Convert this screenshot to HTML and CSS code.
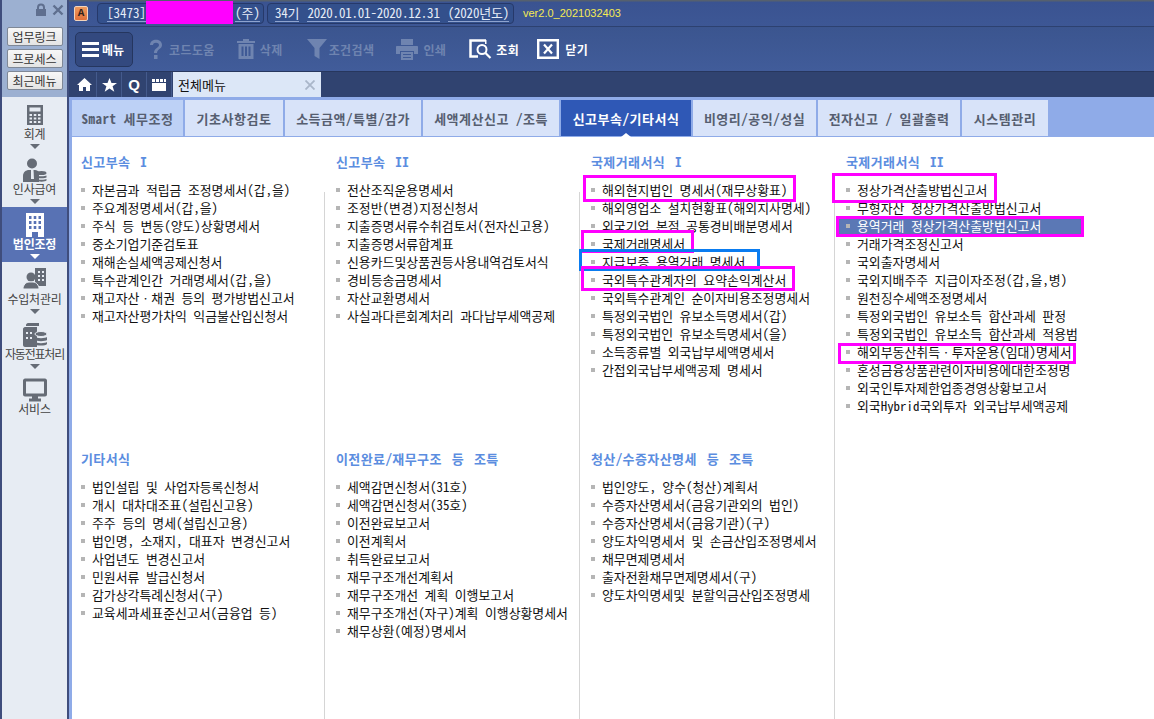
FILE: index.html
```html
<!DOCTYPE html>
<html lang="ko">
<head>
<meta charset="utf-8">
<title>전체메뉴</title>
<link rel="stylesheet" href="styles.css">
</head>
<body>
<div class="app">
  <aside class="side">
    <div class="side-top">
      <div class="side-ctl">
        <svg width="14" height="14" viewBox="0 0 14 14"><path d="M3 6V4.500a4 4 0 0 1 8 0V6h1v7H2V6zm2 0h4V4.500a2 2 0 0 0-4 0z" fill="#5f6f8f"/></svg>
        <svg width="14" height="14" viewBox="0 0 14 14"><path d="M2.500 2.500l9 9M11.500 2.500l-9 9" stroke="#5f6f8f" stroke-width="2.400"/></svg>
      </div>
      <button class="side-btn">업무링크</button>
      <button class="side-btn">프로세스</button>
      <button class="side-btn">최근메뉴</button>
    </div>
    <nav class="side-nav">
      <a class="nav-item">
        <svg width="20" height="20" viewBox="0 0 20 20"><path fill-rule="evenodd" d="M2 0h16v20H2zM4.500 2.500v4h11v-4zM4.500 9v2h2.500V9zm4.300 0v2h2.500V9zm4.200 0v2h2.500V9zM4.500 12.500v2h2.500v-2zm4.300 0v2h2.500v-2zm4.200 0v2h2.500v-2zM4.500 16v2h2.500v-2zm4.300 0v2h2.500v-2zm4.200 0v2h2.500v-2z" fill="#666c76"/></svg>
        <span class="nav-label">회계</span><i class="nav-arrow"></i>
      </a>
      <a class="nav-item">
        <svg width="24" height="24" viewBox="0 0 24 24"><circle cx="9" cy="5.500" r="5" fill="#666c76"/><path d="M0 24v-6c0-4 3-6 6-6h6c2 0 3 1 4 2v10z" fill="#666c76"/><path d="M8 12h2.500l.5 9h-3z" fill="#e7ecf3"/><ellipse cx="18.500" cy="15" rx="5" ry="2" fill="#666c76"/><path d="M13.500 17.500c1 1 9 1 10 0v2c-1 1-9 1-10 0zM13.500 21c1 1 9 1 10 0v1.500c-1 1.500-9 1.500-10 0z" fill="#666c76"/></svg>
        <span class="nav-label">인사급여</span><i class="nav-arrow"></i>
      </a>
      <a class="nav-item is-active">
        <svg width="20" height="24" viewBox="0 0 20 24"><path fill-rule="evenodd" d="M1 0h18v24h-6v-5H7v5H1zM4 3v3h2.500V3zm4.700 0v3h2.600V3zm4.800 0v3H16V3zM4 8v3h2.500V8zm4.700 0v3h2.600V8zm4.800 0v3H16V8zM4 13v3h2.500v-3zm4.700 0v3h2.600v-3zm4.800 0v3H16v-3z" fill="#fff"/></svg>
        <span class="nav-label">법인조정</span><i class="nav-arrow"></i>
      </a>
      <a class="nav-item">
        <svg width="24" height="24" viewBox="0 0 24 24"><path fill-rule="evenodd" d="M12 0h11v18H12zM15 3v2h2V3zm4 0v2h2V3zM15 7v2h2V7zm4 0v2h2V7zM15 11v2h2v-2zm4 0v2h2v-2z" fill="#666c76"/><circle cx="8" cy="9" r="4.500" fill="#666c76"/><path d="M0 21c0-4 3-7 6-7h4c3 0 6 3 6 7z" fill="#666c76" stroke="#e7ecf3"/></svg>
        <span class="nav-label">수입처관리</span><i class="nav-arrow"></i>
      </a>
      <a class="nav-item">
        <svg width="24" height="24" viewBox="0 0 24 24"><path fill-rule="evenodd" d="M3 2c0-1 1-2 2-2h11v3H3zM0 6c0-1 1-2 2-2h12v20H2c-1 0-2-1-2-2zm3 3v2h2V9zm4 0v2h2V9zM3 14v2h2v-2zm4 0v2h2v-2z" fill="#666c76"/><ellipse cx="18" cy="11" rx="6" ry="2.500" fill="#666c76" stroke="#e7ecf3"/><path d="M12 14c1 1.500 11 1.500 12 0v3c-1 1.500-11 1.500-12 0zM12 19c1 1.500 11 1.500 12 0v2c-1 2-11 2-12 0z" fill="#666c76"/></svg>
        <span class="nav-label nav-label-long">자동전표처리</span><i class="nav-arrow"></i>
      </a>
      <a class="nav-item">
        <svg width="24" height="23" viewBox="0 0 24 23"><path fill-rule="evenodd" d="M2 0h20c1 0 2 1 2 2v14c0 1-1 2-2 2h-7v2h3v3H6v-3h3v-2H2c-1 0-2-1-2-2V2c0-1 1-2 2-2zM3 3v12h18V3z" fill="#666c76"/></svg>
        <span class="nav-label">서비스</span>
      </a>
    </nav>
  </aside>

  <main class="main">
    <header class="info-bar">
      <span class="a-badge">A</span>
      <div class="pill pill-co">
        <span class="pill-field">[3473]</span>
        <span class="pill-field pill-name">(주)</span>
      </div>
      <div class="pill pill-period">
        <span class="pill-field">34기</span>
        <span class="pill-field">2020.01.01-2020.12.31</span>
        <span class="pill-field">(2020년도)</span>
      </div>
      <span class="version">ver2.0_2021032403</span>
    </header>

    <div class="toolbar">
      <button class="menu-btn">
        <span class="burger"><i></i><i></i><i></i></span>
        메뉴
      </button>
      <a class="tool tool-help">
        <svg width="16" height="21" viewBox="0 0 16 21"><path d="M2 6c0-7 12-7 12 0 0 4-5 4-5 8H6c0-5 5-5 5-8 0-3-6-3-6 0zM6 16h3.500v4H6z" fill="#6f84b0"/></svg>
        코드도움
      </a>
      <a class="tool tool-del">
        <svg width="18" height="20" viewBox="0 0 18 20"><path fill-rule="evenodd" d="M6 0h6v2h6v2H0V2h6zM1.500 5h15v15h-15zM4.500 7.500V17h2V7.500zm3.500 0V17h2V7.500zm3.500 0V17h2V7.500z" fill="#6f84b0"/></svg>
        삭제
      </a>
      <a class="tool tool-filter">
        <svg width="20" height="20" viewBox="0 0 20 20"><path d="M0 0h20l-7.500 9v11l-5-3V9z" fill="#6f84b0"/></svg>
        조건검색
      </a>
      <a class="tool tool-print">
        <svg width="22" height="21" viewBox="0 0 22 21"><path fill-rule="evenodd" d="M5 0h12v6H5zM1 7h20c.6 0 1 .4 1 1v7h-4v-3H4v3H0V8c0-.6.4-1 1-1zM5 13h12v8H5zm2 2v1h8v-1zm0 3v1h8v-1z" fill="#6f84b0"/></svg>
        인쇄
      </a>
      <a class="tool tool-on tool-search">
        <svg width="23" height="20" viewBox="0 0 23 20"><path d="M17 1.500H1.500v16H9" fill="none" stroke="#fff" stroke-width="2.500"/><path d="M17 1H16v4h1.500V1" fill="#fff"/><circle cx="13" cy="10.500" r="4.500" fill="none" stroke="#fff" stroke-width="2"/><path d="M16.500 14l5 5" stroke="#fff" stroke-width="2.200"/></svg>
        조회
      </a>
      <a class="tool tool-on tool-close">
        <svg width="22" height="20" viewBox="0 0 22 20"><path d="M1.200 1.200h19.600v17.600H1.200z" fill="none" stroke="#fff" stroke-width="2.400"/><path d="M7 5.500l8 9M15 5.500l-8 9" stroke="#fff" stroke-width="2.200"/></svg>
        닫기
      </a>
    </div>

    <div class="tab-bar">
      <a class="icon-tab">
        <svg width="15" height="13" viewBox="0 0 15 13"><path d="M7.500 0L15 7h-2v6H9V9H6v4H2V7H0z" fill="#fff"/></svg>
      </a>
      <a class="icon-tab">
        <svg width="15" height="14" viewBox="0 0 15 14"><path d="M7.500 0l2 5h5.500l-4.400 3.300 1.700 5.500-4.800-3.300-4.800 3.300 1.700-5.500L0 5h5.500z" fill="#fff"/></svg>
      </a>
      <a class="icon-tab icon-tab-q">Q</a>
      <a class="icon-tab">
        <svg width="14" height="12" viewBox="0 0 14 12"><path d="M0 0h3v3H0zM4 0h3v3H4zM8 0h3v3H8zM12 0h2v3h-2zM0 4h14v8H0z" fill="#fff"/></svg>
      </a>
      <div class="page-tab">
        <span>전체메뉴</span>
        <svg width="10" height="10" viewBox="0 0 10 10"><path d="M.5.500l9 9M9.500.500l-9 9" stroke="#a9b6c9" stroke-width="1.800"/></svg>
      </div>
    </div>

    <div class="content">
      <div class="cat-tabs">
        <a class="cat-tab cat-first">Smart 세무조정</a>
        <a class="cat-tab cat-2">기초사항검토</a>
        <a class="cat-tab cat-3">소득금액/특별/감가</a>
        <a class="cat-tab cat-4">세액계산신고 /조특</a>
        <a class="cat-tab cat-active">신고부속/기타서식</a>
        <a class="cat-tab cat-6">비영리/공익/성실</a>
        <a class="cat-tab cat-7">전자신고 / 일괄출력</a>
        <a class="cat-tab cat-8">시스템관리</a>
      </div>

      <div class="columns">
        <div class="col">
          <section class="group">
            <h2>신고부속 I</h2>
            <ul>
              <li>자본금과 적립금 조정명세서(갑,을)</li>
              <li>주요계정명세서(갑,을)</li>
              <li>주식 등 변동(양도)상황명세서</li>
              <li>중소기업기준검토표</li>
              <li>재해손실세액공제신청서</li>
              <li>특수관계인간 거래명세서(갑,을)</li>
              <li>재고자산ㆍ채권 등의 평가방법신고서</li>
              <li>재고자산평가차익 익금불산입신청서</li>
            </ul>
          </section>
          <section class="group">
            <h2>기타서식</h2>
            <ul>
              <li>법인설립 및 사업자등록신청서</li>
              <li>개시 대차대조표(설립신고용)</li>
              <li>주주 등의 명세(설립신고용)</li>
              <li>법인명, 소재지, 대표자 변경신고서</li>
              <li>사업년도 변경신고서</li>
              <li>민원서류 발급신청서</li>
              <li>감가상각특례신청서(구)</li>
              <li>교육세과세표준신고서(금융업 등)</li>
            </ul>
          </section>
        </div>
        <div class="col">
          <section class="group">
            <h2>신고부속 II</h2>
            <ul>
              <li>전산조직운용명세서</li>
              <li>조정반(변경)지정신청서</li>
              <li>지출증명서류수취검토서(전자신고용)</li>
              <li>지출증명서류합계표</li>
              <li>신용카드및상품권등사용내역검토서식</li>
              <li>경비등송금명세서</li>
              <li>자산교환명세서</li>
              <li>사실과다른회계처리 과다납부세액공제</li>
            </ul>
          </section>
          <section class="group">
            <h2>이전완료/재무구조 등 조특</h2>
            <ul>
              <li>세액감면신청서(31호)</li>
              <li>세액감면신청서(35호)</li>
              <li>이전완료보고서</li>
              <li>이전계획서</li>
              <li>취득완료보고서</li>
              <li>재무구조개선계획서</li>
              <li>재무구조개선 계획 이행보고서</li>
              <li>재무구조개선(자구)계획 이행상황명세서</li>
              <li>채무상환(예정)명세서</li>
            </ul>
          </section>
        </div>
        <div class="col">
          <section class="group">
            <h2>국제거래서식 I</h2>
            <ul>
              <li>해외현지법인 명세서(재무상황표)</li>
              <li>해외영업소 설치현황표(해외지사명세)</li>
              <li>외국기업 본점 공통경비배분명세서</li>
              <li>국제거래명세서</li>
              <li>지급보증 용역거래 명세서</li>
              <li>국외특수관계자의 요약손익계산서</li>
              <li>국외특수관계인 순이자비용조정명세서</li>
              <li>특정외국법인 유보소득명세서(갑)</li>
              <li>특정외국법인 유보소득명세서(을)</li>
              <li>소득종류별 외국납부세액명세서</li>
              <li>간접외국납부세액공제 명세서</li>
            </ul>
          </section>
          <section class="group">
            <h2>청산/수증자산명세 등 조특</h2>
            <ul>
              <li>법인양도, 양수(청산)계획서</li>
              <li>수증자산명세서(금융기관외의 법인)</li>
              <li>수증자산명세서(금융기관)(구)</li>
              <li>양도차익명세서 및 손금산입조정명세서</li>
              <li>채무면제명세서</li>
              <li>출자전환채무면제명세서(구)</li>
              <li>양도차익명세및 분할익금산입조정명세</li>
            </ul>
          </section>
        </div>
        <div class="col">
          <section class="group">
            <h2>국제거래서식 II</h2>
            <ul>
              <li>정상가격산출방법신고서</li>
              <li>무형자산 정상가격산출방법신고서</li>
              <li class="is-selected">용역거래 정상가격산출방법신고서</li>
              <li>거래가격조정신고서</li>
              <li>국외출자명세서</li>
              <li>국외지배주주 지급이자조정(갑,을,병)</li>
              <li>원천징수세액조정명세서</li>
              <li>특정외국법인 유보소득 합산과세 판정</li>
              <li>특정외국법인 유보소득 합산과세 적용범</li>
              <li>해외부동산취득ㆍ투자운용(임대)명세서</li>
              <li>혼성금융상품관련이자비용에대한조정명</li>
              <li>외국인투자제한업종경영상황보고서</li>
              <li>외국Hybrid국외투자 외국납부세액공제</li>
            </ul>
          </section>
        </div>
      </div>
    </div>
  </main>
</div>

<div class="mark mark-name"></div>
<div class="mark mark-a"></div>
<div class="mark mark-b"></div>
<div class="mark mark-blue"></div>
<div class="mark mark-c"></div>
<div class="mark mark-d"></div>
<div class="mark mark-e"></div>
<div class="mark mark-f"></div>
</body>
</html>
```

FILE: styles.css
```css
* { box-sizing: border-box; }
html, body { margin: 0; height: 100%; overflow: hidden; }
body {
  font-family: "Noto Sans CJK KR", "Liberation Sans", sans-serif;
  font-size: 12px;
  font-feature-settings: "hwid";
  color: #111;
  background: #fff;
}
ul { list-style: none; margin: 0; padding: 0; }
h2 { margin: 0; }
a { display: block; }

.app { display: flex; height: 719px; }

/* Left rail */
.side {
  width: 69px;
  flex: none;
  display: flex;
  flex-direction: column;
  border-left: 2px solid #3f4d7c;
  border-right: 2px solid #3f4d7c;
  background: #e7ecf3;
}
.side-top {
  height: 97px;
  background: #9cb0d1;
  display: flex;
  flex-direction: column;
  align-items: center;
  gap: 3px;
}
.side-ctl {
  height: 24px;
  width: 100%;
  padding: 3px 2px 0 0;
  display: flex;
  justify-content: flex-end;
  gap: 3px;
}
.side-btn {
  width: 56px;
  height: 19px;
  padding: 0;
  font: 12px/16px "Noto Sans CJK KR", sans-serif;
  letter-spacing: 0;
  color: #333;
  background: linear-gradient(#f7f7f7, #e4e4e4);
  border: 1px solid #7f8896;
  border-radius: 2px;
}
.side-nav { display: flex; flex-direction: column; }
.nav-item {
  height: 55px;
  display: flex;
  flex-direction: column;
  align-items: center;
  padding-top: 6px;
  color: #444;
  white-space: nowrap;
}
.nav-item svg { height: 24px; flex: none; }
.nav-label { font-size: 12px; line-height: 16px; letter-spacing: -.2px; margin-top: -1px; }
.nav-label-long { letter-spacing: -1.2px; }
.nav-arrow {
  width: 0;
  height: 0;
  margin-top: 2px;
  border: 5px solid transparent;
  border-top: 5px solid #666c76;
  border-bottom: 0;
}
.is-active { background: #5872b4; color: #fff; font-weight: 700; }
.is-active .nav-arrow { border-top-color: #fff; }

/* Main column */
.main { flex: 1; min-width: 0; display: flex; flex-direction: column; }

.info-bar {
  height: 27px;
  flex: none;
  display: flex;
  align-items: center;
  padding: 0 0 0 5px;
  background: linear-gradient(#55606f 0, #55606f 1px, #3a5391 2px, #3d5795);
  border-bottom: 1px solid #2d4170;
  color: #e6ecf7;
}
.a-badge {
  width: 14px;
  height: 15px;
  margin-right: 9px;
  background: linear-gradient(#ee9a5e, #e0703a);
  border: 1px solid #f3d4bb;
  border-radius: 2px;
  color: #31211a;
  font: 700 11px/13px "Liberation Mono", monospace;
  text-align: center;
}
.pill {
  height: 21px;
  display: flex;
  align-items: center;
  padding: 0 6px 0 9px;
  background: #33508c;
  border: 1px solid #26396a;
  border-radius: 4px;
  margin-right: 3px;
  font-size: 13px;
  white-space: nowrap;
}
.pill-co { width: 167px; }
.pill-period { width: 247px; gap: 8px; letter-spacing: -.2px; margin-right: 9px; padding-left: 7px; }
.pill-field {
  height: 17px;
  line-height: 15px;
  border-bottom: 1px solid #8ea3cf;
}
.pill-name { margin-left: 89px; }
.version {
  font: 11px "Liberation Sans", sans-serif;
  color: #f5ea54;
}

.toolbar {
  height: 45px;
  flex: none;
  display: flex;
  align-items: center;
  padding-left: 6px;
  background: linear-gradient(#3b558f, #415c9a);
  border-bottom: 1px solid #27375e;
  white-space: nowrap;
}
.menu-btn {
  width: 58px;
  height: 35px;
  padding: 0 0 0 6px;
  display: flex;
  align-items: center;
  gap: 3px;
  color: #fff;
  font: 700 12px "Noto Sans CJK KR", sans-serif;
  background: #33497f;
  border: 1px solid #25365f;
  border-radius: 5px;
}
.burger { display: flex; flex-direction: column; gap: 3px; }
.burger i { display: block; width: 17px; height: 3px; background: #fff; }
.tool {
  display: flex;
  align-items: center;
  gap: 5px;
  color: #6f84b0;
  font-weight: 700;
  font-size: 12px;
  letter-spacing: .4px;
}
.tool-help { margin-left: 15px; }
.tool-del { margin-left: 22px; }
.tool-filter { margin-left: 24px; gap: 2px; }
.tool-print { margin-left: 22px; }
.tool-on { color: #fff; }
.tool-search { margin-left: 23px; gap: 4px; }
.tool-close { margin-left: 18px; gap: 6px; }

.tab-bar {
  height: 25px;
  flex: none;
  display: flex;
  padding-left: 3px;
  background: #304370;
}
.icon-tab {
  width: 25px;
  display: flex;
  align-items: center;
  justify-content: center;
  border-right: 1px solid #445a8c;
  color: #fff;
}
.icon-tab-q { font: 700 15px "Liberation Sans", sans-serif; }
.page-tab {
  width: 148px;
  margin-left: 1px;
  padding: 0 6px 0 5px;
  display: flex;
  align-items: center;
  justify-content: space-between;
  background: #dce7f7;
  font-size: 13px;
}

.content {
  flex: 1;
  min-height: 0;
  display: flex;
  flex-direction: column;
  border-left: 3px solid #8fabe8;
}
.cat-tabs {
  height: 40px;
  flex: none;
  display: flex;
  gap: 2px;
  padding: 3px 0 1px;
  background: #8fabe8;
  white-space: nowrap;
}
.cat-tab {
  display: flex;
  align-items: center;
  justify-content: center;
  background: #d8e3f9;
  color: #565e70;
  font-weight: 700;
  font-size: 13px;
  letter-spacing: .5px;
}
.cat-first { width: 111px; background: #bdd1f6; }
.cat-2 { width: 98px; }
.cat-3 { width: 136px; }
.cat-4 { width: 136px; }
.cat-active { width: 130px; position: relative; background: #2f58b6; color: #fff; }
.cat-active::after {
  content: "";
  position: absolute;
  left: 60px;
  bottom: -1px;
  border: 5px solid transparent;
  border-bottom: 4px solid #fff;
  border-top: 0;
}
.cat-6 { width: 123px; }
.cat-7 { width: 142px; }
.cat-8 { width: 86px; }

.columns {
  flex: 1;
  display: grid;
  grid-template-columns: 253px 255px 255px 1fr;
}
.col { position: relative; padding-left: 11px; }
.col:first-child { padding-left: 9px; }
.col:not(:first-child)::before {
  content: "";
  position: absolute;
  left: -1px;
  top: 55px;
  bottom: 0;
  width: 1px;
  background: #d5d5d5;
}
.group { height: 297px; padding-top: 16px; }
.group h2 {
  height: 18px;
  font-size: 13px;
  line-height: 18px;
  font-weight: 700;
  letter-spacing: .4px;
  word-spacing: 3px;
  color: #5b8de0;
  margin-bottom: 10px;
}
.group li {
  position: relative;
  height: 18px;
  line-height: 18px;
  padding-left: 11px;
  font-size: 12.900px;
  white-space: nowrap;
  color: #111;
}
.group li::before {
  content: "";
  position: absolute;
  left: 0;
  top: 7px;
  width: 4px;
  height: 4px;
  background: #b5b5b5;
}
.group li.is-selected {
  margin: 0 -1px 0 -7px;
  padding-left: 18px;
  width: 243px;
  background: #5b78b5;
  color: #fff;
}
.group li.is-selected::before { left: 7px; }

/* Redaction and review marks drawn over the screen */
.mark { position: absolute; border: 3px solid #ff00ff; }
.mark-name { left: 146px; top: 1px; width: 87px; height: 23px; background: #ff00ff; }
.mark-a { left: 583px; top: 175px; width: 213px; height: 27px; }
.mark-b { left: 581px; top: 230px; width: 113px; height: 23px; }
.mark-blue { left: 579px; top: 249px; width: 181px; height: 22px; border-color: #0a7cf0; }
.mark-c { left: 581px; top: 266px; width: 214px; height: 25px; }
.mark-d { left: 832px; top: 173px; width: 165px; height: 30px; }
.mark-e { left: 836px; top: 216px; width: 248px; height: 21px; }
.mark-f { left: 838px; top: 343px; width: 238px; height: 21px; }
```
